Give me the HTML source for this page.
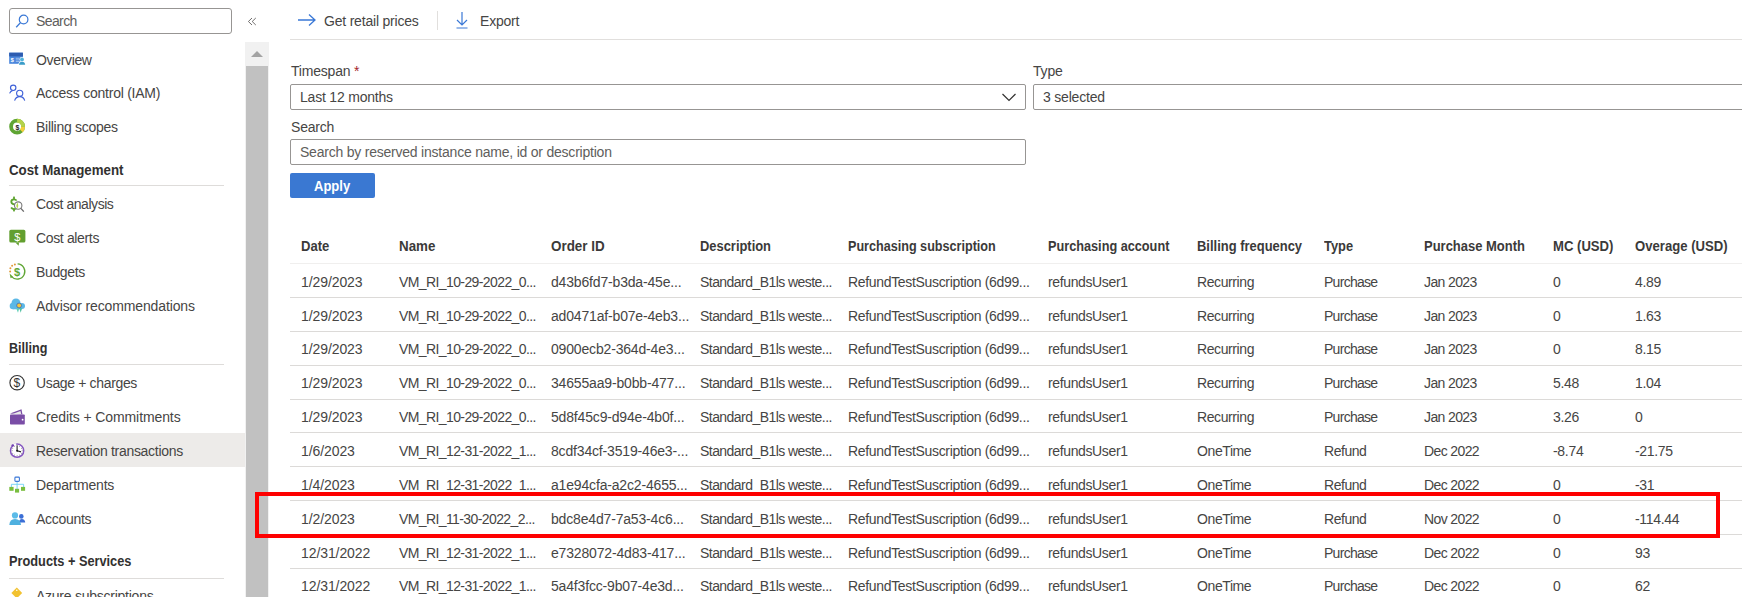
<!DOCTYPE html>
<html><head><meta charset="utf-8">
<style>
html,body{margin:0;padding:0;}
body{width:1742px;height:597px;overflow:hidden;position:relative;background:#fff;font-family:"Liberation Sans",sans-serif;color:#323130;font-size:14px;}
.a{position:absolute;}
.t{position:absolute;white-space:nowrap;font-size:14px;line-height:20px;letter-spacing:-0.2px;color:#464544;}
.el{letter-spacing:-0.9px;}
.h{font-weight:bold;font-size:14px;letter-spacing:0;transform:scaleX(0.93);transform-origin:0 0;color:#3b3a39;}
.hl{position:absolute;left:290px;width:1452px;height:1px;background:#f0efee;}
.rl{position:absolute;left:290px;width:1452px;height:1px;background:#dcdad8;}
.nav{position:absolute;left:36px;white-space:nowrap;font-size:14px;line-height:20px;letter-spacing:-0.2px;color:#464544;}
.sec{position:absolute;left:9px;white-space:nowrap;font-size:14px;font-weight:bold;line-height:20px;letter-spacing:0;transform:scaleX(0.925);transform-origin:0 0;color:#323130;}
.secl{position:absolute;left:9px;width:215px;height:1px;background:#dedcda;}
.ic{position:absolute;left:9px;width:17px;height:17px;}
.box{position:absolute;box-sizing:border-box;border:1px solid #979593;border-radius:2px;background:#fff;}
</style></head>
<body>
<div class="a" style="left:0;top:433px;width:245px;height:34px;background:#edebe9"></div>
<!-- sidebar search -->
<div class="box" style="left:9px;top:8px;width:223px;height:26px;border-radius:3px"></div>
<svg class="a" style="left:15px;top:13px" width="16" height="16" viewBox="0 0 16 16"><circle cx="8.6" cy="6.5" r="4.3" fill="none" stroke="#3a78d6" stroke-width="1.2"/><line x1="5.5" y1="9.6" x2="1.2" y2="14.3" stroke="#3a78d6" stroke-width="1.3"/></svg>
<div class="nav" style="top:10.5px;color:#605e5c;letter-spacing:-0.6px">Search</div>
<!-- collapse -->
<svg class="a" style="left:246px;top:16px" width="12" height="11" viewBox="0 0 12 11"><path d="M6 2 L2.4 5.5 L6 9 M9.8 2 L6.2 5.5 L9.8 9" fill="none" stroke="#605e5c" stroke-width="0.9"/></svg>

<svg class="a" style="left:0;top:0" width="245" height="597" viewBox="0 0 245 597">
<!-- Overview -->
<rect x="9.2" y="52.7" width="13.7" height="11.1" fill="#4a86dc"/>
<rect x="9.2" y="52.7" width="13.7" height="3.7" fill="#2d5cb0"/>
<text x="10.6" y="62.3" font-family="Liberation Sans" font-weight="bold" font-size="6" fill="#fff">$</text>
<path d="M15.8 58.3h4M15.8 59.9h4M15.8 61.5h4" stroke="#a9c8f0" stroke-width="0.8"/>
<circle cx="22" cy="59.4" r="2.4" fill="#fff"/><path d="M18.3 65.2 Q18.5 61 22 61 Q25.5 61 25.8 65.2 Z" fill="#fff"/>
<circle cx="22" cy="59.4" r="1.9" fill="#4fb3dc"/>
<path d="M19 64.8 Q19.2 61.7 22 61.7 Q24.9 61.7 25.2 64.8 Z" fill="#3a9cc8"/>
<!-- Access control -->
<g fill="none" stroke="#3f61d8" stroke-width="1.15">
<circle cx="13.2" cy="87.8" r="2.7"/>
<path d="M9.6 93.4 Q10.6 90.9 12.5 90.6"/>
<circle cx="19.7" cy="93.3" r="3.1"/>
<path d="M14.6 100.6 Q15.8 96.6 19.7 96.6 Q23.6 96.6 24.7 100.6"/>
</g>
<!-- Billing scopes -->
<circle cx="17.1" cy="126.7" r="6" fill="none" stroke="#5fa534" stroke-width="3.8"/>
<path d="M17.1 118.8 A7.9 7.9 0 0 1 25 126.7 L21.15 126.7 A4.05 4.05 0 0 0 17.1 122.65 Z" fill="#b4d24a"/>
<path d="M25 126.7 A7.9 7.9 0 0 1 22.7 132.3 L19.95 129.55 A4.05 4.05 0 0 0 21.15 126.7 Z" fill="#f4cf3a"/>
<text x="15.6" y="129.5" font-family="Liberation Sans" font-weight="bold" font-size="7" fill="#222">$</text>
<!-- Cost analysis -->
<g fill="#5ea42f"><rect x="13.1" y="196.6" width="1.8" height="2.6"/><rect x="13.1" y="208.8" width="1.8" height="2.6"/></g>
<path d="M16.6 200.6 Q15.8 199.3 14 199.3 Q11.3 199.3 11.3 201.7 Q11.3 203.7 14 204.3 Q16.6 204.9 16.6 207 Q16.6 209.1 14 209.1 Q12.1 209.1 11.1 207.6" fill="none" stroke="#5ea42f" stroke-width="1.8"/>
<circle cx="18.2" cy="205.6" r="3.7" fill="#fff" stroke="#7a7a7a" stroke-width="1.1"/>
<path d="M17.2 202.6 Q19.3 205.6 17.2 208.6 Q15.6 205.6 17.2 202.6Z" fill="#b5d84a"/>
<path d="M20.9 208.4 L23.8 211.6" stroke="#666" stroke-width="1.3"/>
<!-- Cost alerts -->
<rect x="9.3" y="229.8" width="16.1" height="12.8" rx="1.6" fill="#629f2f"/>
<path d="M15.4 242.4 L18.6 245.8 L19 242.4Z" fill="#629f2f"/>
<text x="14.2" y="241" font-family="Liberation Sans" font-size="11" fill="#fff">$</text>
<!-- Budgets -->
<path d="M17.6 263.9 A7.6 7.6 0 1 1 11.6 276.6" fill="none" stroke="#5fa534" stroke-width="1.3"/>
<path d="M9.6 273.6 L13 276.8 L10.6 278.2Z" fill="#5fa534"/>
<g fill="#e19a3a"><circle cx="14.9" cy="264.4" r="1"/><circle cx="12.1" cy="265.7" r="1"/><circle cx="10.4" cy="268.3" r="1"/><circle cx="10.1" cy="271.6" r="1"/></g>
<text x="13.9" y="276.2" font-family="Liberation Sans" font-weight="bold" font-size="11" fill="#5fa534">$</text>
<!-- Advisor -->
<g fill="#5cb8e6"><circle cx="16" cy="303" r="4.5"/><circle cx="12.9" cy="306" r="3.2"/><circle cx="22" cy="306" r="3"/><rect x="12.9" y="304" width="9.2" height="5.3"/></g>
<path d="M16.3 308.2 L18 312.8 L19.2 308.2Z" fill="#5dd0b5"/><path d="M19.4 308.2 L20.7 312.8 L22 308.2Z" fill="#4fbfa0"/>
<circle cx="19.1" cy="305.5" r="2.4" fill="#f4c63c" stroke="#2c5cc0" stroke-width="0.7"/>
<!-- Usage + charges -->
<circle cx="17.1" cy="382.7" r="7.2" fill="none" stroke="#333" stroke-width="1.1"/>
<text x="13.6" y="387.2" font-family="Liberation Sans" font-size="12" fill="#333">$</text>
<!-- Credits -->
<path d="M10 413.4 L21.5 409.3 L22.5 414.5 Z" fill="#7b4ea6"/>
<path d="M11.8 414.2 L20.5 411 L21.2 414.2 Z" fill="#e8e8e8"/>
<rect x="10" y="414.5" width="14.8" height="10" rx="0.8" fill="#7a4da6"/>
<circle cx="22.6" cy="419.7" r="0.9" fill="#fff"/>
<!-- Reservation clock -->
<circle cx="17.1" cy="450.7" r="6.6" fill="#fff" stroke="#8557c0" stroke-width="1.5"/>
<path d="M13.6 444.9 A6.6 6.6 0 0 1 16.2 444.1" stroke="#fff" stroke-width="1.8" fill="none"/>
<circle cx="12.7" cy="445.4" r="1.2" fill="#6e3fb0"/>
<circle cx="19.60" cy="446.37" r="0.45" fill="#555"/><circle cx="21.43" cy="448.20" r="0.45" fill="#555"/><circle cx="22.10" cy="450.70" r="0.45" fill="#555"/><circle cx="21.43" cy="453.20" r="0.45" fill="#555"/><circle cx="19.60" cy="455.03" r="0.45" fill="#555"/><circle cx="17.10" cy="455.70" r="0.45" fill="#555"/><circle cx="14.60" cy="455.03" r="0.45" fill="#555"/><circle cx="12.77" cy="453.20" r="0.45" fill="#555"/><circle cx="12.10" cy="450.70" r="0.45" fill="#555"/><circle cx="12.77" cy="448.20" r="0.45" fill="#555"/><circle cx="14.60" cy="446.37" r="0.45" fill="#555"/>
<path d="M17.1 450.7 V445.3 M17.1 450.7 L21 451.9" stroke="#222" stroke-width="1.1"/>
<circle cx="17.1" cy="450.7" r="1" fill="#111"/>
<!-- Departments -->
<rect x="14.9" y="477.1" width="4.5" height="4.3" rx="0.9" fill="none" stroke="#3b78d8" stroke-width="1.1"/>
<path d="M17.1 481.9 V489 M11.4 487 V484.3 H23.6 V487" fill="none" stroke="#6fd1f5" stroke-width="0.9"/>
<rect x="9.3" y="486.9" width="4.3" height="3.9" fill="#79be3f"/>
<rect x="15" y="488.8" width="4.1" height="3.8" fill="#79be3f"/>
<rect x="21" y="486.9" width="4.1" height="3.9" fill="#79be3f"/>
<!-- Accounts -->
<circle cx="21.3" cy="516.4" r="2.3" fill="#3b6fd6"/>
<path d="M18.9 522.4 Q19.2 518.9 21.8 518.9 Q25 518.9 25.2 522.4Z" fill="#3b6fd6"/>
<circle cx="15" cy="515.4" r="3.1" fill="#5cbbe8"/>
<path d="M9.3 525 Q9.6 519 15 519 Q20.6 519 21 525Z" fill="#4fb0df"/>
<!-- Azure subscriptions key -->
<path d="M16.8 587.6 L22.2 593 L16.8 598.4 L11.4 593Z" fill="#f2c230"/>
<circle cx="16.8" cy="590.2" r="0.8" fill="#fff"/>
</svg>
<!-- nav items -->
<div class="nav" style="top:49.6px;letter-spacing:-0.34px">Overview</div>
<div class="nav" style="top:83.4px;letter-spacing:-0.25px">Access control (IAM)</div>
<div class="nav" style="top:117.3px;letter-spacing:-0.27px">Billing scopes</div>
<div class="sec" style="top:159.8px;transform:scaleX(0.949)">Cost Management</div>
<div class="secl" style="top:185px"></div>
<div class="nav" style="top:194px;letter-spacing:-0.45px">Cost analysis</div>
<div class="nav" style="top:228px;letter-spacing:-0.35px">Cost alerts</div>
<div class="nav" style="top:262px;letter-spacing:-0.35px">Budgets</div>
<div class="nav" style="top:296px;letter-spacing:-0.13px">Advisor recommendations</div>
<div class="sec" style="top:338px;transform:scaleX(0.9)">Billing</div>
<div class="secl" style="top:364px"></div>
<div class="nav" style="top:373px;letter-spacing:-0.35px">Usage + charges</div>
<div class="nav" style="top:407px;letter-spacing:-0.1px">Credits + Commitments</div>
<div class="nav" style="top:441px;letter-spacing:-0.3px">Reservation transactions</div>
<div class="nav" style="top:475px;letter-spacing:-0.18px">Departments</div>
<div class="nav" style="top:509px;letter-spacing:-0.3px">Accounts</div>
<div class="sec" style="top:551px;transform:scaleX(0.912)">Products + Services</div>
<div class="secl" style="top:578px"></div>
<div class="nav" style="top:585.8px;letter-spacing:-0.25px">Azure subscriptions</div>

<!-- scrollbar -->
<div class="a" style="left:245px;top:42px;width:24px;height:555px;background:#f1f1f1"></div>
<div class="a" style="left:246px;top:66px;width:22px;height:531px;background:#c1c1c1"></div>
<svg class="a" style="left:250px;top:50px" width="14" height="8" viewBox="0 0 14 8"><polygon points="1,7 7,1 13,7" fill="#a3a3a3"/></svg>

<!-- toolbar -->
<svg class="a" style="left:297px;top:13px" width="20" height="14" viewBox="0 0 20 14"><path d="M1 7 H18 M12 1.5 L18 7 L12 12.5" fill="none" stroke="#3a78d6" stroke-width="1.3"/></svg>
<div class="t" style="left:324px;top:10.5px">Get retail prices</div>
<div class="a" style="left:437px;top:11px;width:1px;height:19px;background:#e1dfdd"></div>
<svg class="a" style="left:455px;top:11px" width="14" height="18" viewBox="0 0 14 18"><path d="M7 1 V14 M2 9 L7 14 L12 9 M1.5 17 H12.5" fill="none" stroke="#3a78d6" stroke-width="1.2"/></svg>
<div class="t" style="left:480px;top:10.5px">Export</div>
<div class="a" style="left:290px;top:39px;width:1452px;height:1px;background:#e1dfdd"></div>

<!-- form -->
<div class="t" style="left:291px;top:61px">Timespan <span style="color:#a4262c">*</span></div>
<div class="box" style="left:290px;top:84px;width:736px;height:26px;"></div>
<div class="t" style="left:300px;top:87px">Last 12 months</div>
<svg class="a" style="left:1001px;top:91px" width="16" height="12" viewBox="0 0 16 12"><path d="M1.5 3 L8 9.5 L14.5 3" fill="none" stroke="#323130" stroke-width="1.2"/></svg>
<div class="t" style="left:1033px;top:61px">Type</div>
<div class="box" style="left:1033px;top:84px;width:720px;height:26px;"></div>
<div class="t" style="left:1043px;top:87px">3 selected</div>
<div class="t" style="left:291px;top:117px">Search</div>
<div class="box" style="left:290px;top:139px;width:736px;height:26px;"></div>
<div class="t" style="left:300px;top:142px;color:#605e5c;letter-spacing:-0.22px">Search by reserved instance name, id or description</div>
<div class="a" style="left:290px;top:173px;width:85px;height:25px;background:#3a78d2;border-radius:2px"></div>
<div class="t h" style="left:314px;top:175.5px;color:#fff;font-size:14px">Apply</div>

<!-- table -->
<div class="t h" style="left:301px;top:236.25px;transform:scaleX(0.934)">Date</div>
<div class="t h" style="left:399px;top:236.25px;transform:scaleX(0.953)">Name</div>
<div class="t h" style="left:551px;top:236.25px;transform:scaleX(0.959)">Order ID</div>
<div class="t h" style="left:700px;top:236.25px;transform:scaleX(0.922)">Description</div>
<div class="t h" style="left:848px;top:236.25px;transform:scaleX(0.9)">Purchasing subscription</div>
<div class="t h" style="left:1048px;top:236.25px;transform:scaleX(0.907)">Purchasing account</div>
<div class="t h" style="left:1197px;top:236.25px;transform:scaleX(0.925)">Billing frequency</div>
<div class="t h" style="left:1324px;top:236.25px;transform:scaleX(0.918)">Type</div>
<div class="t h" style="left:1424px;top:236.25px;transform:scaleX(0.927)">Purchase Month</div>
<div class="t h" style="left:1553px;top:236.25px;transform:scaleX(0.936)">MC (USD)</div>
<div class="t h" style="left:1635px;top:236.25px;transform:scaleX(0.937)">Overage (USD)</div>
<div class="hl" style="top:263px"></div>
<div class="t " style="left:301px;top:271.75px;letter-spacing:-0.09px">1/29/2023</div>
<div class="t " style="left:399px;top:271.75px;letter-spacing:-0.6px">VM_RI_10-29-2022_0...</div>
<div class="t " style="left:551px;top:271.75px;letter-spacing:-0.17px">d43b6fd7-b3da-45e...</div>
<div class="t " style="left:700px;top:271.75px;letter-spacing:-0.55px">Standard_B1ls weste...</div>
<div class="t " style="left:848px;top:271.75px;letter-spacing:-0.33px">RefundTestSuscription (6d99...</div>
<div class="t " style="left:1048px;top:271.75px;letter-spacing:-0.37px">refundsUser1</div>
<div class="t " style="left:1197px;top:271.75px;letter-spacing:-0.4px">Recurring</div>
<div class="t " style="left:1324px;top:271.75px;letter-spacing:-0.72px">Purchase</div>
<div class="t " style="left:1424px;top:271.75px;letter-spacing:-0.62px">Jan 2023</div>
<div class="t " style="left:1553px;top:271.75px;letter-spacing:-0.3px">0</div>
<div class="t " style="left:1635px;top:271.75px;letter-spacing:-0.33px">4.89</div>
<div class="rl" style="top:297.00px"></div>
<div class="t " style="left:301px;top:305.60px;letter-spacing:-0.09px">1/29/2023</div>
<div class="t " style="left:399px;top:305.60px;letter-spacing:-0.6px">VM_RI_10-29-2022_0...</div>
<div class="t " style="left:551px;top:305.60px;letter-spacing:-0.17px">ad0471af-b07e-4eb3...</div>
<div class="t " style="left:700px;top:305.60px;letter-spacing:-0.55px">Standard_B1ls weste...</div>
<div class="t " style="left:848px;top:305.60px;letter-spacing:-0.33px">RefundTestSuscription (6d99...</div>
<div class="t " style="left:1048px;top:305.60px;letter-spacing:-0.37px">refundsUser1</div>
<div class="t " style="left:1197px;top:305.60px;letter-spacing:-0.4px">Recurring</div>
<div class="t " style="left:1324px;top:305.60px;letter-spacing:-0.72px">Purchase</div>
<div class="t " style="left:1424px;top:305.60px;letter-spacing:-0.62px">Jan 2023</div>
<div class="t " style="left:1553px;top:305.60px;letter-spacing:-0.3px">0</div>
<div class="t " style="left:1635px;top:305.60px;letter-spacing:-0.33px">1.63</div>
<div class="rl" style="top:330.85px"></div>
<div class="t " style="left:301px;top:339.45px;letter-spacing:-0.09px">1/29/2023</div>
<div class="t " style="left:399px;top:339.45px;letter-spacing:-0.6px">VM_RI_10-29-2022_0...</div>
<div class="t " style="left:551px;top:339.45px;letter-spacing:-0.17px">0900ecb2-364d-4e3...</div>
<div class="t " style="left:700px;top:339.45px;letter-spacing:-0.55px">Standard_B1ls weste...</div>
<div class="t " style="left:848px;top:339.45px;letter-spacing:-0.33px">RefundTestSuscription (6d99...</div>
<div class="t " style="left:1048px;top:339.45px;letter-spacing:-0.37px">refundsUser1</div>
<div class="t " style="left:1197px;top:339.45px;letter-spacing:-0.4px">Recurring</div>
<div class="t " style="left:1324px;top:339.45px;letter-spacing:-0.72px">Purchase</div>
<div class="t " style="left:1424px;top:339.45px;letter-spacing:-0.62px">Jan 2023</div>
<div class="t " style="left:1553px;top:339.45px;letter-spacing:-0.3px">0</div>
<div class="t " style="left:1635px;top:339.45px;letter-spacing:-0.33px">8.15</div>
<div class="rl" style="top:364.70px"></div>
<div class="t " style="left:301px;top:373.30px;letter-spacing:-0.09px">1/29/2023</div>
<div class="t " style="left:399px;top:373.30px;letter-spacing:-0.6px">VM_RI_10-29-2022_0...</div>
<div class="t " style="left:551px;top:373.30px;letter-spacing:-0.17px">34655aa9-b0bb-477...</div>
<div class="t " style="left:700px;top:373.30px;letter-spacing:-0.55px">Standard_B1ls weste...</div>
<div class="t " style="left:848px;top:373.30px;letter-spacing:-0.33px">RefundTestSuscription (6d99...</div>
<div class="t " style="left:1048px;top:373.30px;letter-spacing:-0.37px">refundsUser1</div>
<div class="t " style="left:1197px;top:373.30px;letter-spacing:-0.4px">Recurring</div>
<div class="t " style="left:1324px;top:373.30px;letter-spacing:-0.72px">Purchase</div>
<div class="t " style="left:1424px;top:373.30px;letter-spacing:-0.62px">Jan 2023</div>
<div class="t " style="left:1553px;top:373.30px;letter-spacing:-0.3px">5.48</div>
<div class="t " style="left:1635px;top:373.30px;letter-spacing:-0.33px">1.04</div>
<div class="rl" style="top:398.55px"></div>
<div class="t " style="left:301px;top:407.15px;letter-spacing:-0.09px">1/29/2023</div>
<div class="t " style="left:399px;top:407.15px;letter-spacing:-0.6px">VM_RI_10-29-2022_0...</div>
<div class="t " style="left:551px;top:407.15px;letter-spacing:-0.17px">5d8f45c9-d94e-4b0f...</div>
<div class="t " style="left:700px;top:407.15px;letter-spacing:-0.55px">Standard_B1ls weste...</div>
<div class="t " style="left:848px;top:407.15px;letter-spacing:-0.33px">RefundTestSuscription (6d99...</div>
<div class="t " style="left:1048px;top:407.15px;letter-spacing:-0.37px">refundsUser1</div>
<div class="t " style="left:1197px;top:407.15px;letter-spacing:-0.4px">Recurring</div>
<div class="t " style="left:1324px;top:407.15px;letter-spacing:-0.72px">Purchase</div>
<div class="t " style="left:1424px;top:407.15px;letter-spacing:-0.62px">Jan 2023</div>
<div class="t " style="left:1553px;top:407.15px;letter-spacing:-0.3px">3.26</div>
<div class="t " style="left:1635px;top:407.15px;letter-spacing:-0.33px">0</div>
<div class="rl" style="top:432.40px"></div>
<div class="t " style="left:301px;top:441.00px;letter-spacing:-0.09px">1/6/2023</div>
<div class="t " style="left:399px;top:441.00px;letter-spacing:-0.6px">VM_RI_12-31-2022_1...</div>
<div class="t " style="left:551px;top:441.00px;letter-spacing:-0.17px">8cdf34cf-3519-46e3-...</div>
<div class="t " style="left:700px;top:441.00px;letter-spacing:-0.55px">Standard_B1ls weste...</div>
<div class="t " style="left:848px;top:441.00px;letter-spacing:-0.33px">RefundTestSuscription (6d99...</div>
<div class="t " style="left:1048px;top:441.00px;letter-spacing:-0.37px">refundsUser1</div>
<div class="t " style="left:1197px;top:441.00px;letter-spacing:-0.4px">OneTime</div>
<div class="t " style="left:1324px;top:441.00px;letter-spacing:-0.45px">Refund</div>
<div class="t " style="left:1424px;top:441.00px;letter-spacing:-0.62px">Dec 2022</div>
<div class="t " style="left:1553px;top:441.00px;letter-spacing:-0.3px">-8.74</div>
<div class="t " style="left:1635px;top:441.00px;letter-spacing:-0.33px">-21.75</div>
<div class="rl" style="top:466.25px"></div>
<div class="t " style="left:301px;top:474.85px;letter-spacing:-0.09px">1/4/2023</div>
<div class="t " style="left:399px;top:474.85px;letter-spacing:-0.6px">VM_RI_12-31-2022_1...</div>
<div class="t " style="left:551px;top:474.85px;letter-spacing:-0.17px">a1e94cfa-a2c2-4655...</div>
<div class="t " style="left:700px;top:474.85px;letter-spacing:-0.55px">Standard_B1ls weste...</div>
<div class="t " style="left:848px;top:474.85px;letter-spacing:-0.33px">RefundTestSuscription (6d99...</div>
<div class="t " style="left:1048px;top:474.85px;letter-spacing:-0.37px">refundsUser1</div>
<div class="t " style="left:1197px;top:474.85px;letter-spacing:-0.4px">OneTime</div>
<div class="t " style="left:1324px;top:474.85px;letter-spacing:-0.45px">Refund</div>
<div class="t " style="left:1424px;top:474.85px;letter-spacing:-0.62px">Dec 2022</div>
<div class="t " style="left:1553px;top:474.85px;letter-spacing:-0.3px">0</div>
<div class="t " style="left:1635px;top:474.85px;letter-spacing:-0.33px">-31</div>
<div class="rl" style="top:500.10px"></div>
<div class="t " style="left:301px;top:508.70px;letter-spacing:-0.09px">1/2/2023</div>
<div class="t " style="left:399px;top:508.70px;letter-spacing:-0.6px">VM_RI_11-30-2022_2...</div>
<div class="t " style="left:551px;top:508.70px;letter-spacing:-0.17px">bdc8e4d7-7a53-4c6...</div>
<div class="t " style="left:700px;top:508.70px;letter-spacing:-0.55px">Standard_B1ls weste...</div>
<div class="t " style="left:848px;top:508.70px;letter-spacing:-0.33px">RefundTestSuscription (6d99...</div>
<div class="t " style="left:1048px;top:508.70px;letter-spacing:-0.37px">refundsUser1</div>
<div class="t " style="left:1197px;top:508.70px;letter-spacing:-0.4px">OneTime</div>
<div class="t " style="left:1324px;top:508.70px;letter-spacing:-0.45px">Refund</div>
<div class="t " style="left:1424px;top:508.70px;letter-spacing:-0.62px">Nov 2022</div>
<div class="t " style="left:1553px;top:508.70px;letter-spacing:-0.3px">0</div>
<div class="t " style="left:1635px;top:508.70px;letter-spacing:-0.33px">-114.44</div>
<div class="rl" style="top:533.95px"></div>
<div class="t " style="left:301px;top:542.55px;letter-spacing:-0.09px">12/31/2022</div>
<div class="t " style="left:399px;top:542.55px;letter-spacing:-0.6px">VM_RI_12-31-2022_1...</div>
<div class="t " style="left:551px;top:542.55px;letter-spacing:-0.17px">e7328072-4d83-417...</div>
<div class="t " style="left:700px;top:542.55px;letter-spacing:-0.55px">Standard_B1ls weste...</div>
<div class="t " style="left:848px;top:542.55px;letter-spacing:-0.33px">RefundTestSuscription (6d99...</div>
<div class="t " style="left:1048px;top:542.55px;letter-spacing:-0.37px">refundsUser1</div>
<div class="t " style="left:1197px;top:542.55px;letter-spacing:-0.4px">OneTime</div>
<div class="t " style="left:1324px;top:542.55px;letter-spacing:-0.72px">Purchase</div>
<div class="t " style="left:1424px;top:542.55px;letter-spacing:-0.62px">Dec 2022</div>
<div class="t " style="left:1553px;top:542.55px;letter-spacing:-0.3px">0</div>
<div class="t " style="left:1635px;top:542.55px;letter-spacing:-0.33px">93</div>
<div class="rl" style="top:567.80px"></div>
<div class="t " style="left:301px;top:576.40px;letter-spacing:-0.09px">12/31/2022</div>
<div class="t " style="left:399px;top:576.40px;letter-spacing:-0.6px">VM_RI_12-31-2022_1...</div>
<div class="t " style="left:551px;top:576.40px;letter-spacing:-0.17px">5a4f3fcc-9b07-4e3d...</div>
<div class="t " style="left:700px;top:576.40px;letter-spacing:-0.55px">Standard_B1ls weste...</div>
<div class="t " style="left:848px;top:576.40px;letter-spacing:-0.33px">RefundTestSuscription (6d99...</div>
<div class="t " style="left:1048px;top:576.40px;letter-spacing:-0.37px">refundsUser1</div>
<div class="t " style="left:1197px;top:576.40px;letter-spacing:-0.4px">OneTime</div>
<div class="t " style="left:1324px;top:576.40px;letter-spacing:-0.72px">Purchase</div>
<div class="t " style="left:1424px;top:576.40px;letter-spacing:-0.62px">Dec 2022</div>
<div class="t " style="left:1553px;top:576.40px;letter-spacing:-0.3px">0</div>
<div class="t " style="left:1635px;top:576.40px;letter-spacing:-0.33px">62</div>
<div class="rl" style="top:601.65px"></div>

<!-- red highlight -->
<div class="a" style="left:255px;top:492px;width:1465px;height:46px;box-sizing:border-box;border:4.3px solid #fe0000"></div>
</body></html>
